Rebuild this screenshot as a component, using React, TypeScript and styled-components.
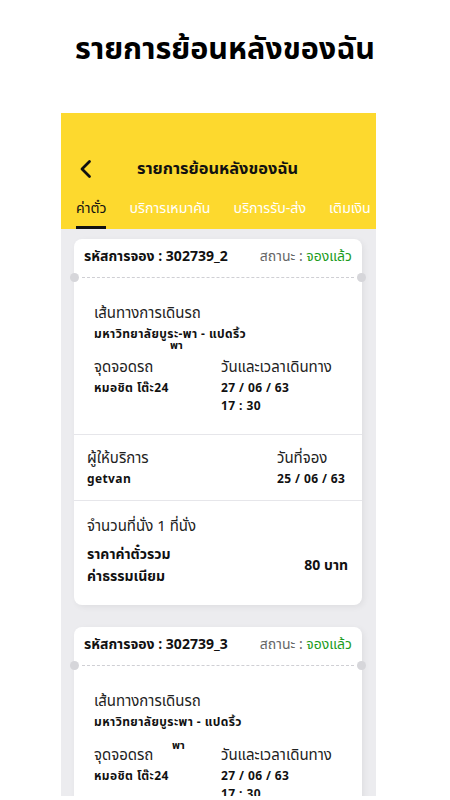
import styled, { createGlobalStyle } from "styled-components"

const GlobalStyle = createGlobalStyle`
    body{
        margin: 0;
        background: #ffffff;
        font-family: "Noto Sans Thai", "Noto Sans", "Liberation Sans", sans-serif;
        color: #111111;
    }
`

type Booking = {
    code: string
    route: string
    stop: string
    date: string
    time: string
    provider: string
    bookedAt: string
    seats: number
    price: number
    strayTop: number
    strayLeft: number
}

const bookings: Booking[] = [
    {
        code: "302739_2",
        route: "มหาวิทยาลัยบูระ-พา - แปดริ้ว",
        stop: "หมอชิต โต๊ะ24",
        date: "27 / 06 / 63",
        time: "17 : 30",
        provider: "getvan",
        bookedAt: "25 / 06 / 63",
        seats: 1,
        price: 80,
        strayTop: 59,
        strayLeft: 96,
    },
    {
        code: "302739_3",
        route: "มหาวิทยาลัยบูระพา - แปดริ้ว",
        stop: "หมอชิต โต๊ะ24",
        date: "27 / 06 / 63",
        time: "17 : 30",
        provider: "getvan",
        bookedAt: "25 / 06 / 63",
        seats: 1,
        price: 80,
        strayTop: 71,
        strayLeft: 98,
    },
]

const tabs = ["ค่าตั๋ว", "บริการเหมาคัน", "บริการรับ-ส่ง", "เติมเงิน"]

function BookingCard({ data }: { data: Booking }) {
    return (
        <Card>
            <CardHead>
                <Code>รหัสการจอง : {data.code}</Code>
                <Status>
                    สถานะ : <em>จองแล้ว</em>
                </Status>
            </CardHead>
            <Perforation />
            <RouteBlock>
                <Label>เส้นทางการเดินรถ</Label>
                <Value>{data.route}</Value>
                <Stray style={{ top: data.strayTop, left: data.strayLeft }}>พา</Stray>
                <TwoCol>
                    <div>
                        <Label>จุดจอดรถ</Label>
                        <Value>{data.stop}</Value>
                    </div>
                    <div>
                        <Label>วันและเวลาเดินทาง</Label>
                        <Value>{data.date}</Value>
                        <Value>{data.time}</Value>
                    </div>
                </TwoCol>
            </RouteBlock>
            <Section>
                <SpreadRow>
                    <div>
                        <Label>ผู้ให้บริการ</Label>
                        <Value>{data.provider}</Value>
                    </div>
                    <RightCol>
                        <Label>วันที่จอง</Label>
                        <Value>{data.bookedAt}</Value>
                    </RightCol>
                </SpreadRow>
            </Section>
            <Section last>
                <Label>จำนวนที่นั่ง {data.seats} ที่นั่ง</Label>
                <SpreadRow center>
                    <div>
                        <PriceLabel>ราคาค่าตั๋วรวม</PriceLabel>
                        <PriceLabel>ค่าธรรมเนียม</PriceLabel>
                    </div>
                    <PriceLabel>{data.price} บาท</PriceLabel>
                </SpreadRow>
            </Section>
        </Card>
    )
}

export default function App() {
    return (
        <>
            <GlobalStyle />
            <PageTitle>รายการย้อนหลังของฉัน</PageTitle>
            <Screen>
                <Header>
                    <TopBar>
                        <BackButton aria-label="back">
                            <svg width="14" height="20" viewBox="0 0 14 20" fill="none">
                                <path d="M10.5 2.5 L3 10 L10.5 17.5" stroke="#111" strokeWidth="2.8" strokeLinecap="round" strokeLinejoin="round" />
                            </svg>
                        </BackButton>
                        <HeaderTitle>รายการย้อนหลังของฉัน</HeaderTitle>
                    </TopBar>
                    <Tabs>
                        {tabs.map((t, i) => (
                            <Tab key={t} active={i === 0}>{t}</Tab>
                        ))}
                    </Tabs>
                </Header>
                <List>
                    {bookings.map((b) => (
                        <BookingCard key={b.code} data={b} />
                    ))}
                </List>
            </Screen>
        </>
    )
}

const PageTitle = styled.h1`
    margin: 0;
    height: 113px;
    padding-top: 27px;
    box-sizing: border-box;
    text-align: center;
    font-size: 30.5px;
    font-weight: 700;
    color: #000;
`

const Screen = styled.div`
    margin-left: 61px;
    width: 315px;
    height: 683px;
    overflow: hidden;
    background: #ececef;
`

const Header = styled.div`
    height: 116px;
    background: #fdd92e;
    display: flex;
    flex-direction: column;
    justify-content: flex-end;
`

const TopBar = styled.div`
    display: flex;
    align-items: center;
    height: 36px;
    padding-left: 18px;
    margin-bottom: 11px;
`

const BackButton = styled.button`
    background: none;
    border: none;
    padding: 0;
    width: 14px;
    height: 20px;
    display: flex;
`

const HeaderTitle = styled.div`
    flex: 1;
    text-align: center;
    padding-right: 34px;
    font-size: 16.4px;
    font-weight: 700;
`

const Tabs = styled.div`
    display: flex;
    gap: 23px;
    padding-left: 15px;
    white-space: nowrap;
`

const Tab = styled.div<{ active?: boolean }>`
    font-size: 14.2px;
    color: ${(p) => (p.active ? "#111" : "#ffffff")};
    padding-bottom: 7px;
    border-bottom: 3px solid ${(p) => (p.active ? "#111" : "transparent")};
`

const List = styled.div`
    display: flex;
    flex-direction: column;
    gap: 22px;
    padding: 10px 14px 0 13px;
`

const Card = styled.div`
    position: relative;
    background: #fff;
    border-radius: 8px;
    box-shadow: 2px 2px 6px rgba(0, 0, 0, 0.06);
`

const CardHead = styled.div`
    display: flex;
    justify-content: space-between;
    align-items: center;
    height: 35px;
    padding: 0 10px 3px 10px;
`

const Code = styled.div`
    font-size: 14px;
    font-weight: 700;
`

const Status = styled.div`
    font-size: 14px;
    color: #666;

    em{
        font-style: normal;
        color: #1c9b1c;
    }
`

const Perforation = styled.div`
    position: relative;
    margin: 0 8px;
    border-top: 1px dashed #cfcfd4;

    &::before, &::after{
        content: "";
        position: absolute;
        top: -5px;
        width: 9px;
        height: 9px;
        border-radius: 50%;
        background: #d6d6da;
    }
    &::before{ left: -12px; }
    &::after{ right: -12px; }
`

const RouteBlock = styled.div`
    position: relative;
    padding: 25px 20px 19px 20px;
    border-bottom: 1px solid #e6e6ea;
`

const Stray = styled.span`
    position: absolute;
    font-size: 11px;
    font-weight: 700;
`

const TwoCol = styled.div`
    display: grid;
    grid-template-columns: 127px 1fr;
    margin-top: 14px;
`

const Label = styled.div`
    font-size: 15px;
    color: #222;
    line-height: 22px;
`

const Value = styled.div`
    font-size: 12px;
    font-weight: 700;
    line-height: 18px;
    letter-spacing: 0.4px;
`

const Section = styled.div<{ last?: boolean }>`
    padding: ${(p) => (p.last ? "15px 14px 17px 13px" : "13px 14px 12px 13px")};
    border-bottom: ${(p) => (p.last ? "none" : "1px solid #e6e6ea")};
`

const SpreadRow = styled.div<{ center?: boolean }>`
    display: flex;
    justify-content: space-between;
    align-items: ${(p) => (p.center ? "center" : "flex-start")};
    margin-top: ${(p) => (p.center ? "6px" : "0")};
`

const RightCol = styled.div`
    min-width: 71px;
`

const PriceLabel = styled.div`
    font-size: 14px;
    font-weight: 700;
    line-height: 22px;
`
